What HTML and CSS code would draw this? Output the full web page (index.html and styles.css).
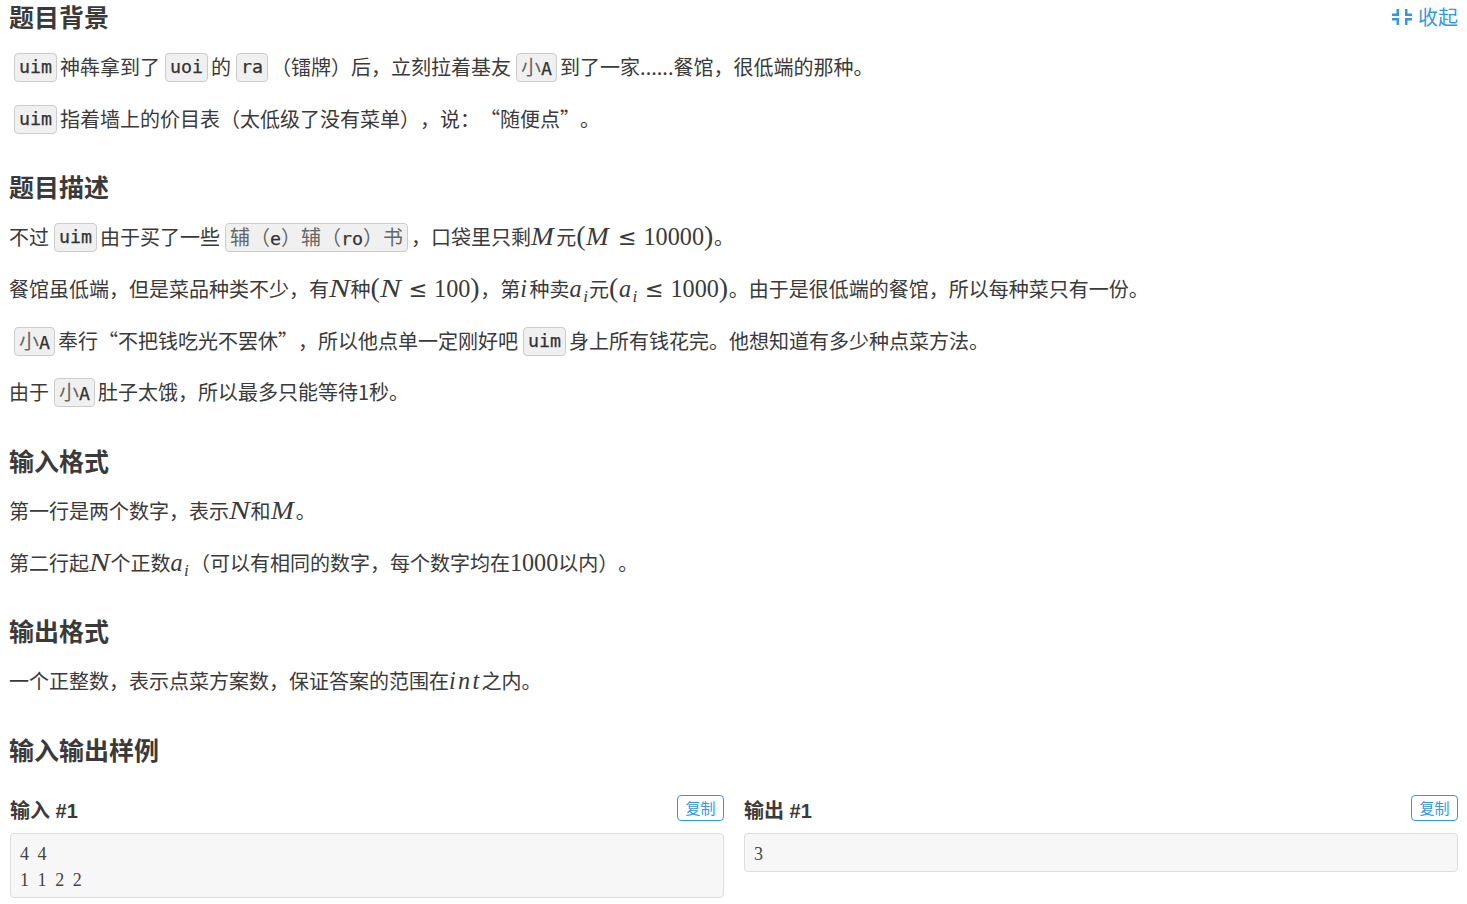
FILE: index.html
```html
<!DOCTYPE html>
<html lang="zh-CN">
<head>
<meta charset="utf-8">
<title>题目</title>
<link rel="stylesheet" href="styles.css">
</head>
<body>
<main class="page">
  <div class="head-row">
    <h2>题目背景</h2>
    <button class="collapse">
      <svg class="collapse-icon" viewBox="0 0 22 16" width="22" height="16" aria-hidden="true"><path d="M1 4.500h4.500V0H8v7H1zM14 0h2.500v4.500H21V7h-7zM1 9h7v7H5.500v-4.500H1zM14 9h7v2.500h-4.500V16H14z"/></svg>
      <span>收起</span>
    </button>
  </div>
  <p><code>uim</code>神犇拿到了<code>uoi</code>的<code>ra</code>（镭牌）后，立刻拉着基友<code><span class="cjk">小</span>A</code>到了一家......餐馆，很低端的那种。</p>
  <p><code>uim</code>指着墙上的价目表（太低级了没有菜单），说：“随便点”。</p>

  <h2>题目描述</h2>
  <p>不过<code>uim</code>由于买了一些<code><span class="cjk">辅（</span>e<span class="cjk">）辅（</span>ro<span class="cjk">）书</span></code>，口袋里只剩<span class="m"><span class="v v-m">M</span></span>元<span class="m"><span class="par">(</span><span class="v v-m">M</span><span class="op">≤</span>10000<span class="par">)</span></span>。</p>
  <p>餐馆虽低端，但是菜品种类不少，有<span class="m"><span class="v v-n">N</span></span>种<span class="m"><span class="par">(</span><span class="v v-n">N</span><span class="op">≤</span>100<span class="par">)</span></span>，第<span class="m"><span class="v v-i">i</span></span>种卖<span class="m"><span class="v v-a">a</span><sub class="v v-s">i</sub></span>元<span class="m"><span class="par">(</span><span class="v v-a">a</span><sub class="v v-s">i</sub><span class="op">≤</span>1000<span class="par">)</span></span>。由于是很低端的餐馆，所以每种菜只有一份。</p>
  <p><code><span class="cjk">小</span>A</code>奉行“不把钱吃光不罢休”，所以他点单一定刚好吧<code>uim</code>身上所有钱花完。他想知道有多少种点菜方法。</p>
  <p>由于<code><span class="cjk">小</span>A</code>肚子太饿，所以最多只能等待1秒。</p>

  <h2>输入格式</h2>
  <p>第一行是两个数字，表示<span class="m"><span class="v v-n">N</span></span>和<span class="m"><span class="v v-m">M</span></span>。</p>
  <p>第二行起<span class="m"><span class="v v-n">N</span></span>个正数<span class="m"><span class="v v-a">a</span><sub class="v v-s">i</sub></span>（可以有相同的数字，每个数字均在<span class="m">1000</span>以内）。</p>

  <h2>输出格式</h2>
  <p>一个正整数，表示点菜方案数，保证答案的范围在<span class="m"><span class="v v-int">int</span></span>之内。</p>

  <h2>输入输出样例</h2>
  <div class="samples">
    <section class="sample">
      <div class="sample-head"><h3>输入 #1</h3><button class="copy">复制</button></div>
      <pre>4 4
1 1 2 2</pre>
    </section>
    <section class="sample">
      <div class="sample-head"><h3>输出 #1</h3><button class="copy">复制</button></div>
      <pre>3</pre>
    </section>
  </div>
</main>
</body>
</html>
```

FILE: styles.css
```css
* { box-sizing: border-box; }
html, body { margin: 0; padding: 0; background: #fff; }
body {
  color: #3a3a3a;
  font-family: "Noto Sans CJK SC", "Liberation Sans", sans-serif;
  font-size: 20px;
  overflow: hidden;
  height: 904px;
  text-spacing-trim: space-all;
}
.page { padding: 0 9px; }
.head-row { display: flex; justify-content: space-between; align-items: flex-start; }
h2 {
  margin: 35.6px 0 15px;
  padding-bottom: 4px;
  font-size: 25px;
  line-height: 32px;
  font-weight: 700;
  color: #3a3a3a;
}
.head-row h2 { margin-top: 0; }
p {
  margin: 0 0 19.7px;
  line-height: 32px;
  height: 32px;
  white-space: nowrap;
}
code {
  display: inline-block;
  margin: 2px 3px 0 5px;
  padding: 0 4px;
  height: 29px;
  line-height: 26px;
  vertical-align: top;
  font-family: "DejaVu Sans Mono", monospace;
  font-size: 18.3px;
  color: #333;
  -webkit-text-stroke: 0.25px #333;
  background: #f0f0f0;
  border: 1px solid #ccc;
  border-radius: 4px;
}
.cjk { font-family: "Noto Sans CJK SC", sans-serif; font-size: 20px; color: #666; -webkit-text-stroke: 0; }
.m { font-family: "Liberation Serif", serif; font-size: 24.2px; line-height: 0; }
.v { display: inline-block; font-style: italic; line-height: 0; transform-origin: left center; }
.v-m { width: 25.2px; transform: scaleX(1.13); }
.v-n { width: 21.5px; transform: scaleX(1.3); }
.v-i { width: 9.3px; }
.v-a { width: 13.6px; }
.v-s { width: 5.8px; font-size: 17px; vertical-align: -5px; }
.v-int { letter-spacing: 2.3px; }
.par { font-size: 28px; line-height: 0; letter-spacing: 0.6px; }
.op { margin: 0 6.7px; font-family: "DejaVu Sans", sans-serif; font-size: 22.4px; line-height: 0; }
.collapse {
  display: flex;
  align-items: center;
  gap: 5px;
  margin-top: 5px;
  padding: 0;
  border: 0;
  background: none;
  color: #3498db;
  font: inherit;
  line-height: 24px;
}
.collapse-icon { fill: #3498db; }
.samples { display: grid; grid-template-columns: 1fr 1fr; gap: 20px; margin: 26px 0 0 1px; }
.sample-head { display: flex; justify-content: space-between; align-items: center; height: 26px; margin-bottom: 12px; }
h3 { margin: 6px 0 0; font-family: "Liberation Sans", "Noto Sans CJK SC", sans-serif; font-size: 20px; line-height: 26px; font-weight: 700; }
.copy {
  width: 47px;
  height: 26px;
  padding: 0;
  border: 1px solid #3498db;
  border-radius: 4px;
  background: #fff;
  color: #3498db;
  font: inherit;
  font-size: 15px;
  line-height: 24px;
}
pre {
  margin: 0;
  padding: 7px 9px 4px;
  background: #f7f7f7;
  border: 1px solid #ddd;
  border-radius: 4px;
  font-family: "Liberation Serif", serif;
  font-size: 18px;
  line-height: 26px;
  word-spacing: 4.1px;
  color: #444;
}
```
